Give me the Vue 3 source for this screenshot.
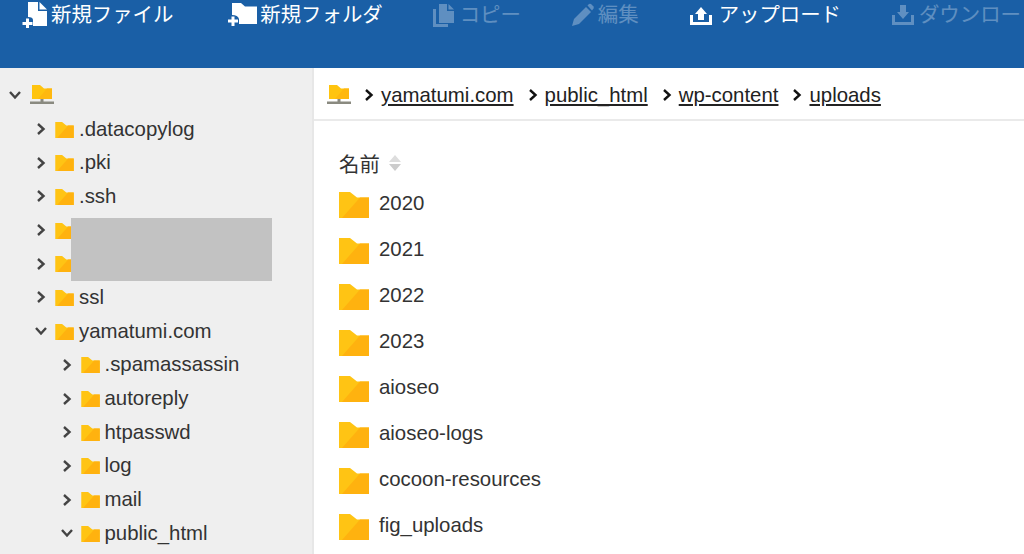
<script setup>
const tools = [
  { label: '新規ファイル', icon: 'newfile', width: 28 },
  { label: '新規フォルダ', icon: 'newfolder', width: 31 },
  { label: 'コピー', icon: 'copy', width: 26, disabled: true },
  { label: '編集', icon: 'edit', width: 26, disabled: true },
  { label: 'アップロード', icon: 'upload', width: 29 },
  { label: 'ダウンロード', icon: 'download', width: 27, disabled: true }
]

const tree = [
  { name: '.datacopylog', level: 1 },
  { name: '.pki', level: 1 },
  { name: '.ssh', level: 1 },
  { name: '', level: 1 },
  { name: '', level: 1 },
  { name: 'ssl', level: 1 },
  { name: 'yamatumi.com', level: 1, open: true },
  { name: '.spamassassin', level: 2 },
  { name: 'autoreply', level: 2 },
  { name: 'htpasswd', level: 2 },
  { name: 'log', level: 2 },
  { name: 'mail', level: 2 },
  { name: 'public_html', level: 2, open: true }
]

const crumbs = ['yamatumi.com', 'public_html', 'wp-content', 'uploads']
const files = ['2020', '2021', '2022', '2023', 'aioseo', 'aioseo-logs', 'cocoon-resources', 'fig_uploads']
</script>

<template>
  <div class="page">
    <svg class="defs" width="0" height="0" aria-hidden="true">
      <symbol id="folder" viewBox="0 0 30 26">
        <path d="M0 0H11L18 5.500H30V26H0Z" fill="#ffc414" />
        <path d="M30 5.500V26H3L21 5.500Z" fill="#ffb20f" />
      </symbol>
      <symbol id="root" viewBox="0 0 24 20">
        <path d="M2 0H10L14 3.500H22V14H2Z" fill="#ffc40f" />
        <path d="M22 3.500V14H8L17 3.500Z" fill="#ffb80f" />
        <path d="M10.500 14H13.500V16.500H24V19H0V16.500H10.500Z" fill="#8a8a80" />
      </symbol>
      <symbol id="chev" viewBox="0 0 10 14">
        <path d="M2 2L7.500 7L2 12" fill="none" stroke="currentColor" stroke-width="2.400" />
      </symbol>
    </svg>

    <header class="toolbar">
      <div v-for="tool in tools" :key="tool.label" class="tool" :class="{ disabled: tool.disabled }">
        <svg class="tool-icon" :width="tool.width" height="28" :viewBox="`0 0 ${tool.width} 28`" fill="#fff">
          <template v-if="tool.icon === 'newfile'">
            <path d="M6 2H16V11H25V26H11V20Q11 17 6 17Z" />
            <path d="M17.500 2L25 9.500H17.500Z" />
            <path d="M4 18.500H7V22H10.500V25H7V28.500H4V25H0.500V22H4Z" />
          </template>
          <template v-else-if="tool.icon === 'newfolder'">
            <path d="M4 3H13L17 6.500H29V24H11V19Q10 15 4 15Z" />
            <path d="M3.500 16.500H6.500V19.500H10V22.500H6.500V26H3.500V22.500H0V19.500H3.500Z" />
          </template>
          <template v-else-if="tool.icon === 'copy'">
            <path d="M0 9H3V24H15V27H0Z" />
            <path d="M6 4H14V11H21V23H6Z" />
            <path d="M15.500 4L21 9.500H15.500Z" />
          </template>
          <template v-else-if="tool.icon === 'edit'">
            <path d="M1 26L3 19L15 7L20 12L8 24Z" />
            <path d="M16.500 5.500L18 4Q19 3.500 20 4L22.500 6.500Q23 7.500 22.500 8.500L21 10.500Z" />
          </template>
          <template v-else-if="tool.icon === 'upload'">
            <path d="M12 7L18 14H15V20H9V14H6Z" />
            <path d="M1 15H4V22H20V15H23V25H1Z" />
          </template>
          <template v-else>
            <path d="M9 5H15V12H18L12 19L6 12H9Z" />
            <path d="M1 15H4V22H20V15H23V25H1Z" />
          </template>
        </svg>
        <span>{{ tool.label }}</span>
      </div>
    </header>

    <div class="body">
      <aside class="sidebar">
        <div class="tree-row root-row">
          <svg class="chev open"><use href="#chev" /></svg>
          <svg class="root-icon"><use href="#root" /></svg>
        </div>
        <div v-for="(item, i) in tree" :key="i" class="tree-row" :class="'level-' + item.level">
          <svg class="chev" :class="{ open: item.open }"><use href="#chev" /></svg>
          <svg class="tree-folder"><use href="#folder" /></svg>
          <span>{{ item.name }}</span>
        </div>
        <div class="redact"></div>
      </aside>

      <main class="content">
        <nav class="crumbs">
          <svg class="crumb-root"><use href="#root" /></svg>
          <template v-for="crumb in crumbs" :key="crumb">
            <svg class="crumb-chev"><use href="#chev" /></svg>
            <a class="crumb">{{ crumb }}</a>
          </template>
        </nav>
        <div class="list">
          <div class="list-head">
            <span>名前</span>
            <span class="sort"><i class="up"></i><i class="down"></i></span>
          </div>
          <div v-for="file in files" :key="file" class="file-row">
            <svg class="file-folder"><use href="#folder" /></svg>
            <span>{{ file }}</span>
          </div>
        </div>
      </main>
    </div>
  </div>
</template>

<style>
html, body {
  margin: 0;
  overflow: hidden;
}
</style>

<style scoped>
.page {
  width: 1024px;
  height: 554px;
  overflow: hidden;
  display: flex;
  flex-direction: column;
  font-family: "Liberation Sans", "Noto Sans CJK JP", sans-serif;
  color: #333;
}

.defs {
  position: absolute;
}

.toolbar {
  height: 68px;
  flex: none;
  box-sizing: border-box;
  background: #1a5fa6;
  display: flex;
  gap: 50px;
  padding-left: 22px;
  color: #fff;
  font-size: 20.400px;
  white-space: nowrap;
}

.tool {
  height: 28px;
  display: flex;
  align-items: center;
  gap: 1px;
  flex: none;
}

.tool:first-child {
  margin-right: 5px;
}

.tool span {
  margin-top: -2px;
}

.tool.disabled {
  opacity: 0.3;
}

.tool-icon {
  flex: none;
}

.body {
  flex: 1;
  display: flex;
  min-height: 0;
}

.sidebar {
  position: relative;
  width: 314px;
  flex: none;
  box-sizing: border-box;
  background: #efefef;
  border-right: 2px solid #e7e7e7;
  padding-top: 10.500px;
  font-size: 20.400px;
  overflow: hidden;
}

.tree-row {
  height: 33.700px;
  display: flex;
  align-items: center;
  white-space: nowrap;
}

.level-1 {
  padding-left: 36px;
}

.level-2 {
  padding-left: 61.500px;
}

.root-row {
  padding-left: 10px;
}

.chev {
  width: 10px;
  height: 14px;
  flex: none;
  color: #444;
}

.chev.open {
  transform: rotate(90deg);
}

.root-icon {
  width: 24px;
  height: 20px;
  margin-left: 10px;
  margin-top: -1px;
}

.tree-folder {
  width: 19px;
  height: 16px;
  margin: 1px 5px 0 9px;
  flex: none;
}

.redact {
  position: absolute;
  left: 71px;
  top: 150px;
  width: 201px;
  height: 63px;
  background: #c2c2c2;
}

.content {
  flex: 1;
  min-width: 0;
}

.crumbs {
  height: 53px;
  box-sizing: border-box;
  border-bottom: 2px solid #eaeaea;
  display: flex;
  align-items: center;
  padding: 3px 0 0 13px;
  font-size: 20.400px;
  white-space: nowrap;
}

.crumb-root {
  width: 24px;
  height: 20px;
  margin-right: 13px;
}

.crumb-chev {
  width: 10px;
  height: 14px;
  color: #111;
  margin-right: 7px;
}

.crumb {
  color: #222;
  text-decoration: underline;
  margin-right: 14px;
}

.list {
  padding: 29px 0 0 25px;
  font-size: 20.400px;
}

.list-head {
  height: 26px;
  display: flex;
  align-items: center;
  gap: 9px;
  margin-bottom: 4px;
}

.sort {
  display: flex;
  flex-direction: column;
  gap: 2px;
}

.sort i {
  display: block;
  width: 0;
  height: 0;
  border-left: 6.500px solid transparent;
  border-right: 6.500px solid transparent;
}

.sort .up {
  border-bottom: 7px solid #ddd;
}

.sort .down {
  border-top: 7px solid #ccc;
}

.file-row {
  height: 46px;
  display: flex;
  align-items: center;
  gap: 10px;
}

.file-folder {
  width: 30px;
  height: 26px;
  margin-top: 3px;
  flex: none;
}
</style>
